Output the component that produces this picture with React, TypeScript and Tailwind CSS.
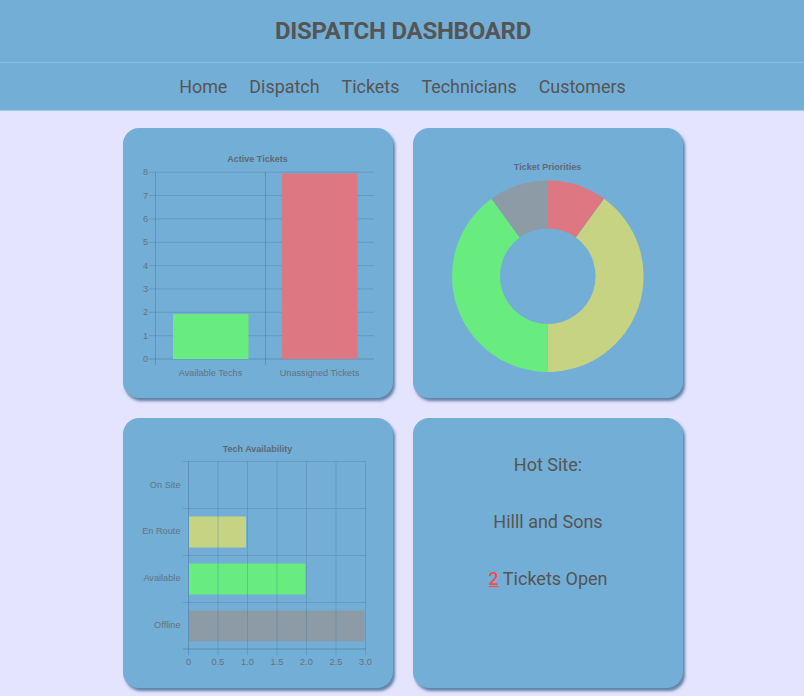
const navLinks = ['Home', 'Dispatch', 'Tickets', 'Technicians', 'Customers'];

function polar(cx: number, cy: number, r: number, deg: number) {
  const a = ((deg - 90) * Math.PI) / 180;
  return [cx + r * Math.cos(a), cy + r * Math.sin(a)];
}

function arcPath(cx: number, cy: number, outer: number, inner: number, from: number, to: number) {
  const [x1, y1] = polar(cx, cy, outer, from);
  const [x2, y2] = polar(cx, cy, outer, to);
  const [x3, y3] = polar(cx, cy, inner, to);
  const [x4, y4] = polar(cx, cy, inner, from);
  const large = to - from > 180 ? 1 : 0;
  return `M${x1} ${y1}A${outer} ${outer} 0 ${large} 1 ${x2} ${y2}L${x3} ${y3}A${inner} ${inner} 0 ${large} 0 ${x4} ${y4}Z`;
}

function Card({ children }: { children: React.ReactNode }) {
  return (
    <div className="h-[270px] w-[270px] rounded-[16px] bg-[#73aed6] shadow-[2px_3px_3px_rgba(40,85,125,0.7)]">
      {children}
    </div>
  );
}

function ActiveTickets() {
  const ticks = [0, 1, 2, 3, 4, 5, 6, 7, 8];
  return (
    <svg width="270" height="270" className="font-['Liberation_Sans',sans-serif]">
      <text x="134.5" y="34" textAnchor="middle" className="fill-[#5f6a78] text-[9px] font-bold">
        Active Tickets
      </text>
      {ticks.map((t) => {
        const y = 231 - t * 23.35;
        return (
          <g key={t}>
            <line x1="26" x2="251" y1={y} y2={y} stroke="#3f6f92" strokeOpacity={t === 0 ? 0.45 : 0.3} />
            <text x="25" y={y + 3} textAnchor="end" className="fill-[#64727f] text-[9.2px]">
              {t}
            </text>
          </g>
        );
      })}
      <line x1="32.5" x2="32.5" y1="44" y2="237" stroke="#3f6f92" strokeOpacity="0.4" />
      <line x1="142.5" x2="142.5" y1="44" y2="237" stroke="#3f6f92" strokeOpacity="0.4" />
      <rect x="50" y="186" width="75.5" height="45" fill="#68ec7f" />
      <rect x="159" y="45.5" width="75.5" height="185.5" fill="#dd7782" />
      <text x="87.5" y="247.5" textAnchor="middle" className="fill-[#64727f] text-[9.2px]">
        Available Techs
      </text>
      <text x="196.5" y="247.5" textAnchor="middle" className="fill-[#64727f] text-[9.2px]">
        Unassigned Tickets
      </text>
    </svg>
  );
}

function TicketPriorities() {
  const slices = [
    { from: 0, to: 36, fill: '#dd7782' },
    { from: 36, to: 180, fill: '#c5d382' },
    { from: 180, to: 324, fill: '#68ec7f' },
    { from: 324, to: 360, fill: '#8c9ba6' },
  ];
  return (
    <svg width="270" height="270" className="font-['Liberation_Sans',sans-serif]">
      <text x="134.5" y="41.5" textAnchor="middle" className="fill-[#5f6a78] text-[9px] font-bold">
        Ticket Priorities
      </text>
      {slices.map((s) => (
        <path key={s.from} d={arcPath(134.8, 148.2, 95.8, 47.8, s.from, s.to)} fill={s.fill} />
      ))}
    </svg>
  );
}

function TechAvailability() {
  const rows = [
    { label: 'On Site', y: 66.5 },
    { label: 'En Route', y: 113 },
    { label: 'Available', y: 160 },
    { label: 'Offline', y: 206.5 },
  ];
  const xTicks = ['0', '0.5', '1.0', '1.5', '2.0', '2.5', '3.0'];
  return (
    <svg width="270" height="270" className="font-['Liberation_Sans',sans-serif]">
      <text x="134.5" y="34" textAnchor="middle" className="fill-[#5f6a78] text-[9px] font-bold">
        Tech Availability
      </text>
      {[43.5, 90.5, 137.5, 184.5].map((y) => (
        <line key={y} x1="60" x2="243" y1={y} y2={y} stroke="#3f6f92" strokeOpacity="0.3" />
      ))}
      <line x1="60" x2="243" y1="231" y2="231" stroke="#3f6f92" strokeOpacity="0.5" />
      <rect x="66" y="98.5" width="57" height="31" fill="#c5d382" />
      <rect x="66" y="145.5" width="116.5" height="31" fill="#68ec7f" />
      <rect x="66" y="192.5" width="175.5" height="31" fill="#8c9ba6" />
      {xTicks.map((t, i) => {
        const x = 65.5 + i * 29.5;
        return (
          <g key={t}>
            <line x1={x} x2={x} y1="43.5" y2="237" stroke="#3f6f92" strokeOpacity={i === 0 ? 0.45 : 0.3} />
            <text x={x} y="247" textAnchor="middle" className="fill-[#64727f] text-[9.2px]">
              {t}
            </text>
          </g>
        );
      })}
      {rows.map((r) => (
        <text key={r.label} x="57.5" y={r.y + 3} textAnchor="end" className="fill-[#64727f] text-[9.2px]">
          {r.label}
        </text>
      ))}
    </svg>
  );
}

export default function App() {
  return (
    <div className="h-[696px] overflow-hidden bg-[#e4e4ff] font-['Roboto',sans-serif] text-[#555555]">
      <header className="border-b border-[#9cc7e6] bg-[#73aed6]">
        <div className="flex h-[63px] items-center justify-center border-b border-[#8dbde0] pl-[2px]">
          <h1 className="text-[24px] font-bold tracking-[-0.25px]">DISPATCH DASHBOARD</h1>
        </div>
        <nav className="flex h-[47px] items-center justify-center gap-[22px] pl-[1px] pt-[1px] text-[17.9px]">
          {navLinks.map((link) => (
            <a key={link}>{link}</a>
          ))}
        </nav>
      </header>

      <main className="mt-[17px] flex justify-center pl-[2px]">
        <div className="grid grid-cols-[270px_270px] gap-5">
          <Card>
            <ActiveTickets />
          </Card>
          <Card>
            <TicketPriorities />
          </Card>
          <Card>
            <TechAvailability />
          </Card>
          <Card>
            <div className="flex flex-col items-center gap-[36px] pt-[36px] text-[18px] leading-[21px]">
              <p>Hot Site:</p>
              <p>Hilll and Sons</p>
              <p>
                <span className="font-medium text-[#ff4a4a] underline">2</span> Tickets Open
              </p>
            </div>
          </Card>
        </div>
      </main>
    </div>
  );
}
